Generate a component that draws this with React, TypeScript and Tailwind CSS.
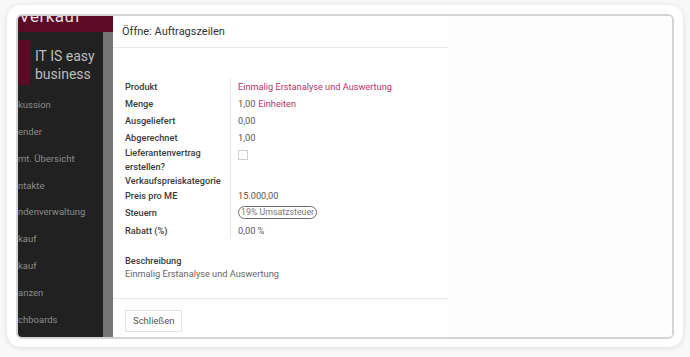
import React from 'react';

const menu = ['kussion', 'ender', 'mt. Übersicht', 'ntakte', 'ndenverwaltung', 'kauf', 'kauf', 'anzen', 'chboards'];

function Field({ label, children, h = 'h-[17px]' }: { label: React.ReactNode; children?: React.ReactNode; h?: string }) {
  return (
    <div className={`flex ${h}`}>
      <div className="w-[105px] pr-2 font-medium text-[#3a3a3a] leading-[14px] flex items-center">{label}</div>
      <div className="flex-1 pl-[7px] border-l border-[#e6e6e6] text-[#555] flex items-center">{children}</div>
    </div>
  );
}

export default function App() {
  return (
    <div className="w-[690px] h-[357px] bg-[#f9f9f9] pt-[5px] pl-[7px] font-['Roboto',sans-serif]">
      <div className="w-[676px] h-[342px] bg-white rounded-[14px] shadow-[0_1px_6px_rgba(0,0,0,0.12)] pt-[9px] pl-[9px]">
        <div className="w-[658px] h-[325px] border-2 border-[#d4d4d4] rounded-[6px] overflow-hidden flex">
          {/* left app chrome */}
          <div className="w-[95px] flex flex-col">
            <div className="h-[16px] bg-[#5c0b27] overflow-hidden">
              <div className="text-[17px] leading-[17px] text-[#e6dde0] mt-[-8px] ml-[1px] tracking-[0.5px]">Verkauf</div>
            </div>
            <div className="flex flex-1">
              <div className="w-[85px] bg-[#212121] overflow-hidden">
                <div className="flex mt-[8px] h-[45px]">
                  <div className="w-[12px] bg-[#5c0b27]" />
                  <div className="pl-[5px] pt-[7px] text-[14px] leading-[18px] text-[#bdbdbd] whitespace-nowrap">
                    IT IS easy
                    <br />
                    business
                  </div>
                </div>
                <div className="mt-[7px]">
                  {menu.map((m, i) => (
                    <div key={i} className="h-[26.8px] flex items-center text-[9.5px] text-[#8c8c8c] whitespace-nowrap">
                      {m}
                    </div>
                  ))}
                </div>
              </div>
              <div className="w-[10px] bg-[#757575]" />
            </div>
          </div>

          {/* dialog */}
          <div className="w-[335px] bg-white flex flex-col text-[9.2px]">
            <div className="h-[32px] border-b border-[#e9e9e9] flex items-center pl-[9px] pt-[1px] text-[11px] text-[#333]">
              Öffne: Auftragszeilen
            </div>
            <div className="flex-1 pl-[12px] pt-[30px]">
              <Field label="Produkt">
                <span className="text-[#b8336a]">Einmalig Erstanalyse und Auswertung</span>
              </Field>
              <Field label="Menge">
                1,00 <span className="ml-[3px] text-[#b8336a]">Einheiten</span>
              </Field>
              <Field label="Ausgeliefert">0,00</Field>
              <Field label="Abgerechnet">1,00</Field>
              <div className="flex h-[28px]">
                <div className="w-[105px] pr-2 font-medium text-[#3a3a3a] leading-[14px]">
                  Lieferantenvertrag
                  <br />
                  erstellen?
                </div>
                <div className="flex-1 pl-[7px] border-l border-[#e6e6e6] pt-[4px]">
                  <div className="w-[10px] h-[10px] border border-[#cfcfcf] bg-white" />
                </div>
              </div>
              <Field label="Verkaufspreiskategorie" h="h-[14px]" />
              <Field label="Preis pro ME" h="h-[15px]">15.000,00</Field>
              <Field label="Steuern" h="h-[19px]">
                <span className="border border-[#6b6b6b] rounded-full px-[2px] leading-[11px] text-[#777] text-[8.8px]">19% Umsatzsteuer</span>
              </Field>
              <Field label="Rabatt (%)">0,00 %</Field>

              <div className="mt-[15px] font-medium text-[#3a3a3a] leading-[13px]">Beschreibung</div>
              <div className="text-[#666] leading-[13px]">Einmalig Erstanalyse und Auswertung</div>
            </div>
            <div className="h-[39px] border-t border-[#e9e9e9] pl-[12px] pt-[11px]">
              <button className="h-[22px] px-[7px] border border-[#e2e2e2] text-[#555] text-[9.5px] bg-white">
                Schließen
              </button>
            </div>
          </div>

          <div className="flex-1 bg-[#fdfdfd]" />
        </div>
      </div>
    </div>
  );
}
